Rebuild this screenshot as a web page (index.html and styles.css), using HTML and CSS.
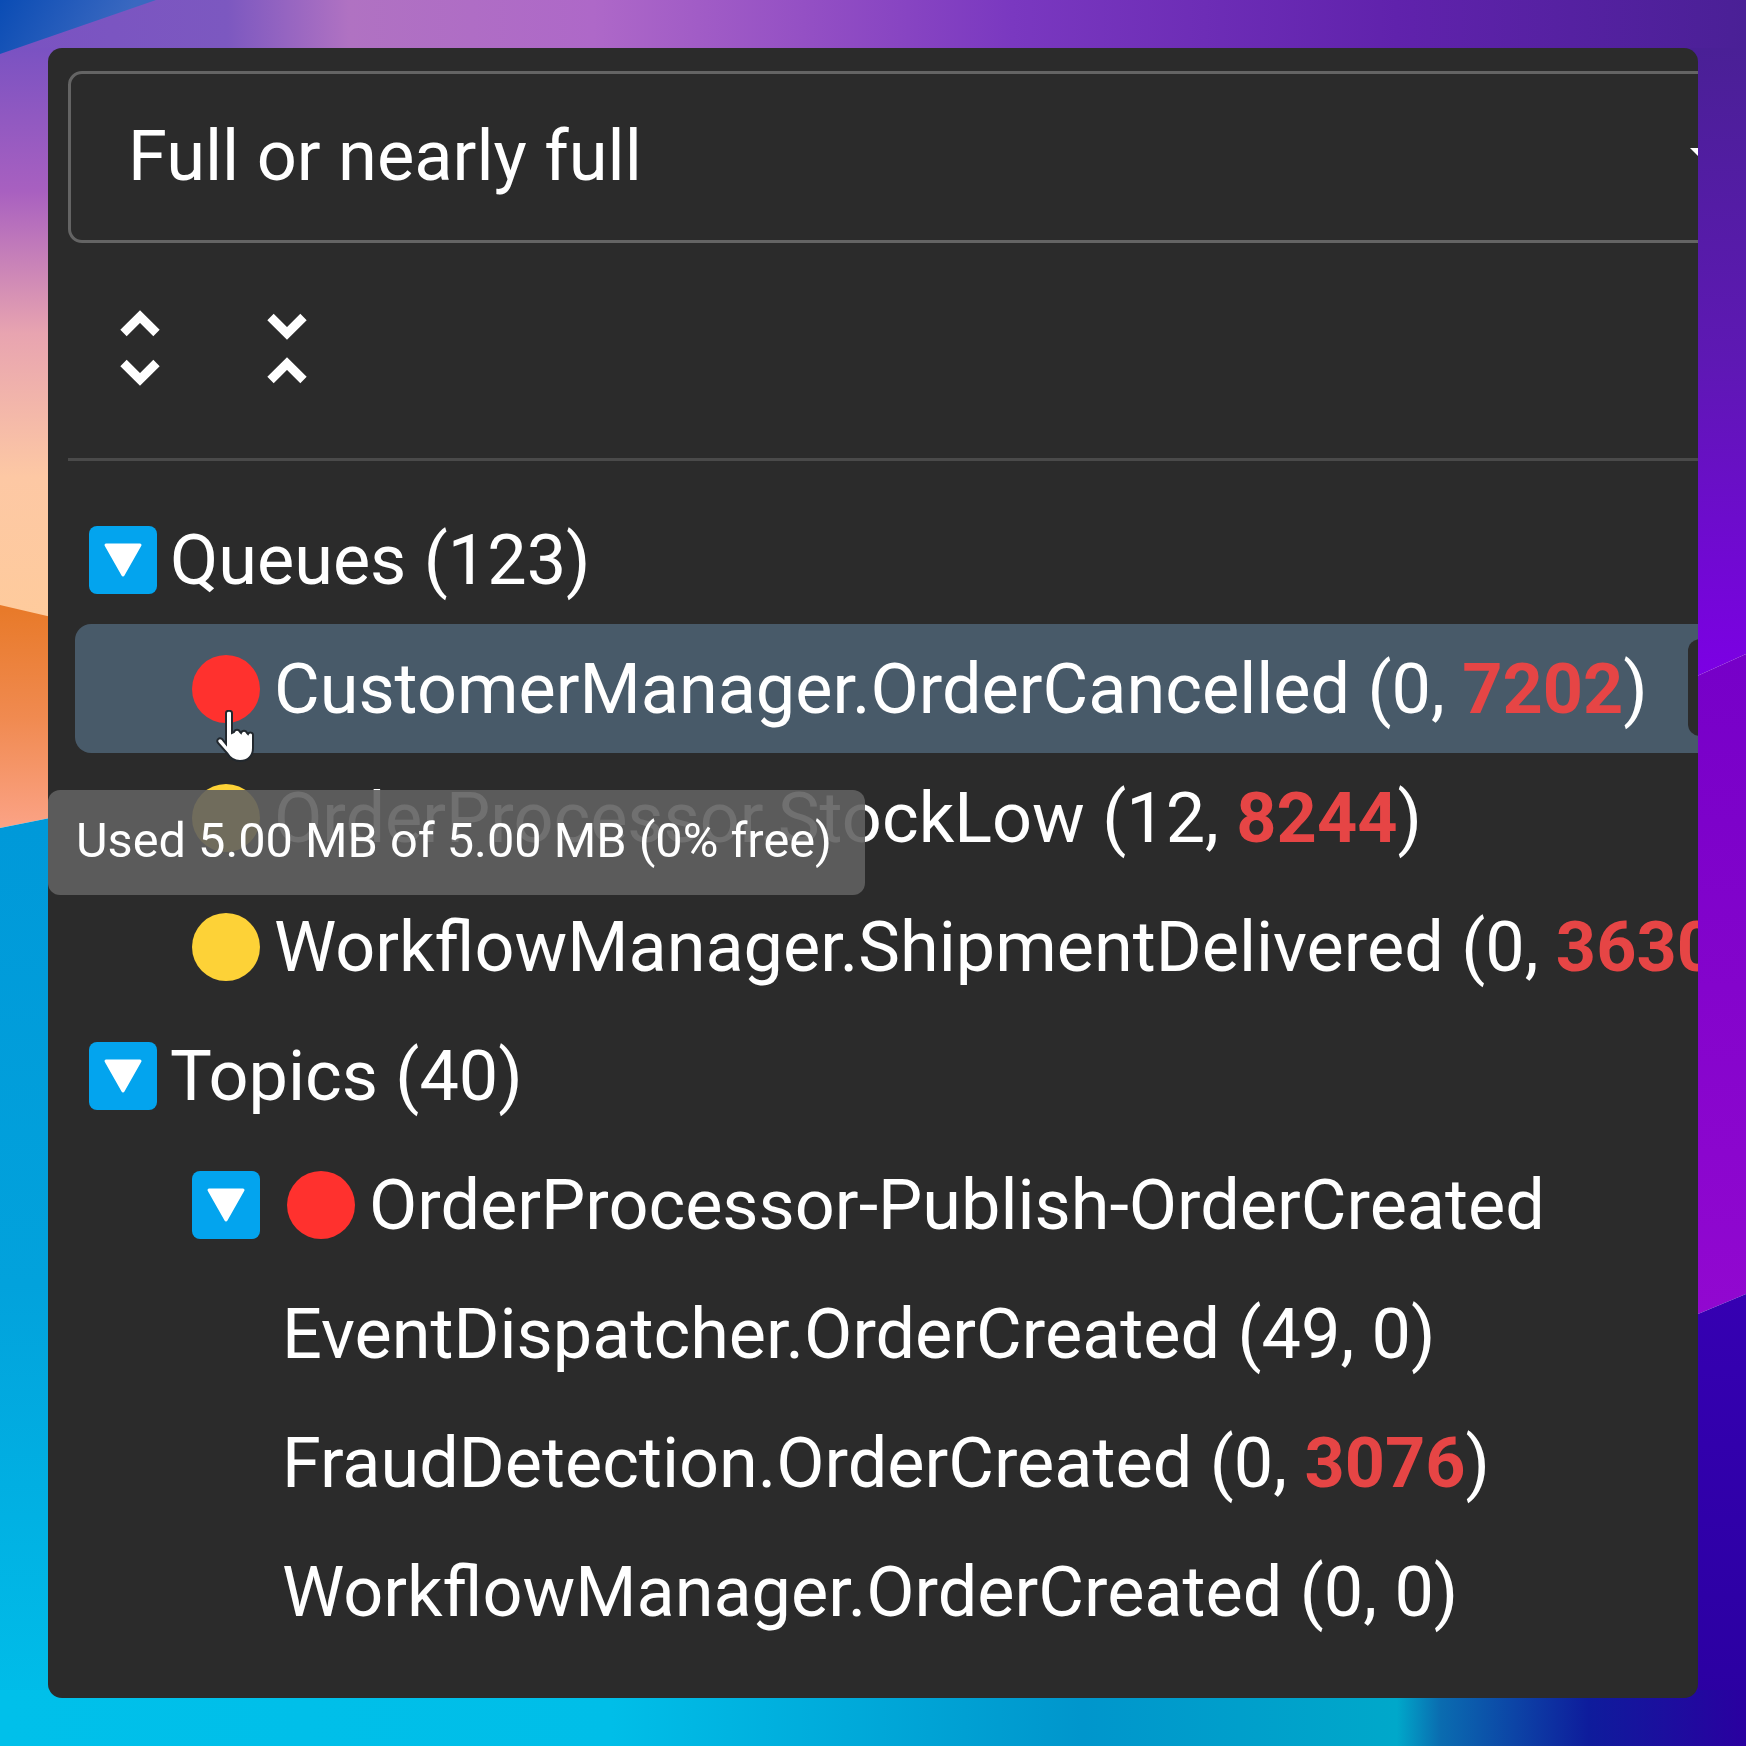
FILE: index.html
```html
<!DOCTYPE html>
<html>
	<head>
		<meta charset="utf-8">
		<title>Queues and topics</title>
		<link rel="stylesheet" href="styles.css">
	</head>
	<body>
		<!-- desktop wallpaper behind the panel -->
		<svg class="wallpaper" width="1746" height="1746" viewBox="0 0 1746 1746">
			<defs>
				<linearGradient id="wallTop" gradientUnits="userSpaceOnUse" x1="0" y1="0" x2="1746" y2="0">
					<stop offset="0" stop-color="#7a52c2"/>
					<stop offset="0.13" stop-color="#7c58c0"/>
					<stop offset="0.2" stop-color="#b072c2"/>
					<stop offset="0.34" stop-color="#ae68c8"/>
					<stop offset="0.58" stop-color="#7a38c0"/>
					<stop offset="0.8" stop-color="#6022ac"/>
					<stop offset="1" stop-color="#4a2096"/>
				</linearGradient>
				<linearGradient id="wallLeft" gradientUnits="userSpaceOnUse" x1="0" y1="48" x2="0" y2="620">
					<stop offset="0" stop-color="#7a52c2"/>
					<stop offset="0.25" stop-color="#a860c0"/>
					<stop offset="0.5" stop-color="#e8a4b0"/>
					<stop offset="0.75" stop-color="#fdc8a4"/>
					<stop offset="1" stop-color="#fecb9c"/>
				</linearGradient>
				<linearGradient id="wallOrange" gradientUnits="userSpaceOnUse" x1="0" y1="610" x2="0" y2="825">
					<stop offset="0" stop-color="#e87a2a"/>
					<stop offset="0.5" stop-color="#f08a50"/>
					<stop offset="1" stop-color="#fba284"/>
				</linearGradient>
				<linearGradient id="wallBlue" gradientUnits="userSpaceOnUse" x1="0" y1="825" x2="0" y2="1746">
					<stop offset="0" stop-color="#0099d9"/>
					<stop offset="0.5" stop-color="#02a2dc"/>
					<stop offset="1" stop-color="#00c0ea"/>
				</linearGradient>
				<linearGradient id="wallCorner" gradientUnits="userSpaceOnUse" x1="0" y1="0" x2="100" y2="60">
					<stop offset="0" stop-color="#0a4cb4"/>
					<stop offset="1" stop-color="#3a68c0"/>
				</linearGradient>
				<linearGradient id="wallRightA" gradientUnits="userSpaceOnUse" x1="0" y1="48" x2="0" y2="676">
					<stop offset="0" stop-color="#4a2096"/>
					<stop offset="0.5" stop-color="#5e18b4"/>
					<stop offset="1" stop-color="#7c00e4"/>
				</linearGradient>
				<linearGradient id="wallRightB" gradientUnits="userSpaceOnUse" x1="0" y1="654" x2="0" y2="1319">
					<stop offset="0" stop-color="#7600c8"/>
					<stop offset="1" stop-color="#9208d0"/>
				</linearGradient>
				<linearGradient id="wallRightC" gradientUnits="userSpaceOnUse" x1="0" y1="1294" x2="0" y2="1746">
					<stop offset="0" stop-color="#3600b2"/>
					<stop offset="1" stop-color="#2a00a0"/>
				</linearGradient>
				<linearGradient id="wallBottom" gradientUnits="userSpaceOnUse" x1="0" y1="0" x2="1746" y2="0">
					<stop offset="0" stop-color="#00c0ea"/>
					<stop offset="0.35" stop-color="#00bee8"/>
					<stop offset="0.62" stop-color="#0096cc"/>
					<stop offset="0.8" stop-color="#00a8ca"/>
					<stop offset="0.825" stop-color="#0a6cb0"/>
					<stop offset="0.91" stop-color="#0e1c9c"/>
					<stop offset="1" stop-color="#2a00a0"/>
				</linearGradient>
			</defs>
			<rect x="0" y="0" width="1746" height="60" fill="url(#wallTop)"/>
			<rect x="0" y="48" width="60" height="600" fill="url(#wallLeft)"/>
			<polygon points="0,605 60,619 60,816 0,828" fill="url(#wallOrange)"/>
			<polygon points="0,828 60,816 60,1746 0,1746" fill="url(#wallBlue)"/>
			<polygon points="0,0 156,0 0,54" fill="url(#wallCorner)"/>
			<polygon points="1686,48 1746,48 1746,654 1686,681" fill="url(#wallRightA)"/>
			<polygon points="1686,681 1746,654 1746,1294 1686,1319" fill="url(#wallRightB)"/>
			<polygon points="1686,1319 1746,1294 1746,1746 1686,1746" fill="url(#wallRightC)"/>
			<rect x="0" y="1690" width="1746" height="56" fill="url(#wallBottom)"/>
		</svg>
		<div class="panel">
			<div class="select">
				<span class="selectText">Full or nearly full</span>
				<svg class="selectArrow" width="30" height="16" viewBox="0 0 30 16"><polygon points="0,0 30,0 15,15" fill="#fff"/></svg>
			</div>
			<div class="toolbar">
				<button class="toolBtn" type="button">
					<svg width="40" height="76" viewBox="0 0 40 76" fill="none" stroke="#fff" stroke-width="9"><polyline points="3.5,23 20,6.5 36.5,23"/><polyline points="3.5,53 20,69.5 36.5,53"/></svg>
				</button>
				<button class="toolBtn" type="button">
					<svg width="40" height="76" viewBox="0 0 40 76" fill="none" stroke="#fff" stroke-width="9"><polyline points="3.5,7 20,23.5 36.5,7"/><polyline points="3.5,70 20,53.5 36.5,70"/></svg>
				</button>
			</div>
			<hr class="divider">
			<div class="tree">
				<div class="row">
					<span class="toggle"><svg width="40" height="36" viewBox="0 0 40 36"><polygon points="3,3 37,3 20,33" fill="#fff" stroke="#fff" stroke-width="3" stroke-linejoin="round"/></svg></span>
					<span class="label">Queues (123)</span>
				</div>
				<div class="row child selected">
					<span class="dot red"></span>
					<span class="label">CustomerManager.OrderCancelled (0, <b class="num">7202</b>)</span>
					<span class="rowAction"></span>
				</div>
				<div class="row child">
					<span class="dot yellow"></span>
					<span class="label">OrderProcessor.StockLow (12, <b class="num">8244</b>)</span>
				</div>
				<div class="row child">
					<span class="dot yellow"></span>
					<span class="label">WorkflowManager.ShipmentDelivered (0, <b class="num">3630</b>)</span>
				</div>
				<div class="row">
					<span class="toggle"><svg width="40" height="36" viewBox="0 0 40 36"><polygon points="3,3 37,3 20,33" fill="#fff" stroke="#fff" stroke-width="3" stroke-linejoin="round"/></svg></span>
					<span class="label">Topics (40)</span>
				</div>
				<div class="row child">
					<span class="toggle"><svg width="40" height="36" viewBox="0 0 40 36"><polygon points="3,3 37,3 20,33" fill="#fff" stroke="#fff" stroke-width="3" stroke-linejoin="round"/></svg></span>
					<span class="dot red"></span>
					<span class="label">OrderProcessor-Publish-OrderCreated</span>
				</div>
				<div class="row leaf"><span class="label">EventDispatcher.OrderCreated (49, 0)</span></div>
				<div class="row leaf"><span class="label">FraudDetection.OrderCreated (0, <b class="num">3076</b>)</span></div>
				<div class="row leaf"><span class="label">WorkflowManager.OrderCreated (0, 0)</span></div>
			</div>
			<div class="tooltip">Used 5.00 MB of 5.00 MB (0% free)</div>
		</div>
		<!-- mouse pointer from the capture -->
		<svg class="cursor" width="42" height="54" viewBox="0 0 42 54">
			<path d="M10 3c0-3 6-3 6 0v20l2-1c1-3 5-3 6 0l1 1c1-3 5-3 6 0l1 1c1-2 5-2 5 1v13c0 8-5 13-13 13-6 0-10-3-13-8L2 33c-2-3 1-6 4-4l4 5z" fill="#fff" stroke="#22282e" stroke-width="2"/>
		</svg>
	</body>
</html>
```

FILE: styles.css
```css
html, body {
	height: 100%;
}
body {
	margin: 0;
	padding: 48px;
	box-sizing: border-box;
	font-family: Roboto, "Liberation Sans", sans-serif;
	color: #fff;
	position: relative;
	overflow: hidden;
}
.wallpaper {
	position: absolute;
	left: 0;
	top: 0;
}
.panel {
	position: relative;
	width: 1650px;
	height: 1650px;
	background: #2b2b2b;
	border-radius: 14px;
	overflow: hidden;
}
.select {
	display: flex;
	align-items: center;
	justify-content: space-between;
	box-sizing: border-box;
	height: 172px;
	margin: 23px -75px 0 20px;
	padding: 0 50px 3px 57px;
	border: 3px solid #646464;
	border-radius: 14px;
}
.selectText {
	font-size: 70.4px;
}
.toolbar {
	display: flex;
	box-sizing: border-box;
	height: 215px;
	align-items: center;
	padding: 0 0 5px 72px;
	gap: 107px;
}
.toolBtn {
	padding: 0;
	border: 0;
	background: none;
	line-height: 0;
}
.divider {
	height: 3px;
	margin: 0 0 0 20px;
	border: 0;
	background: #4a4a4a;
}
.tree {
	padding: 34px 0 0 27px;
}
.row {
	display: flex;
	align-items: center;
	height: 129px;
	white-space: nowrap;
}
.child {
	padding-left: 117px;
	border-radius: 16px;
}
.leaf {
	padding-left: 207px;
}
.selected {
	background: #485a69;
	position: relative;
	margin-right: -40px;
}
.toggle {
	display: flex;
	align-items: center;
	justify-content: center;
	flex: none;
	width: 68px;
	height: 68px;
	margin: 0 13px 0 14px;
	border-radius: 8px;
	background: #03a4ee;
}
.child .toggle {
	margin: 0 27px 0 0;
}
.dot {
	flex: none;
	width: 68px;
	height: 68px;
	margin-right: 14px;
	border-radius: 50%;
}
.red {
	background: #ff312e;
}
.yellow {
	background: #fdd237;
}
.label {
	font-size: 70.2px;
}
.num {
	font-weight: 700;
	color: #e64545;
}
.rowAction {
	position: absolute;
	right: 26px;
	top: 15px;
	width: 24px;
	height: 97px;
	border-radius: 12px;
	background: #2b2b2b;
}
.tooltip {
	position: absolute;
	left: 0;
	top: 742px;
	box-sizing: border-box;
	width: 817px;
	height: 105px;
	padding: 22px 0 0 28px;
	font-size: 48.7px;
	background: rgba(97, 97, 97, 0.9);
	border-radius: 12px;
}
.cursor {
	position: absolute;
	left: 216px;
	top: 710px;
}
```
